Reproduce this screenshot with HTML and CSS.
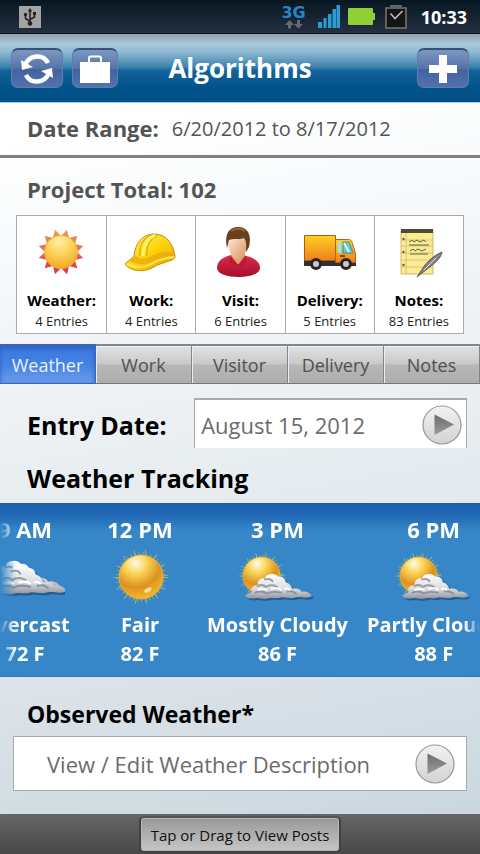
FILE: index.html
```html
<!DOCTYPE html>
<html lang="en">
<head>
    <meta charset="utf-8">
    <meta name="viewport" content="width=device-width, initial-scale=1">
    <title>Algorithms</title>
    <link rel="stylesheet" href="styles.css">
</head>
<body>
    <!-- shared gradients and symbols -->
    <svg class="sprites" width="0" height="0" aria-hidden="true">
        <defs>
            <radialGradient id="sunFill" cx=".45" cy=".2" r=".85">
                <stop offset="0" stop-color="#fff0a0"/>
                <stop offset=".5" stop-color="#fbcf55"/>
                <stop offset="1" stop-color="#f0a21c"/>
            </radialGradient>
            <linearGradient id="rayFill" x1="0" y1="0" x2="0" y2="1">
                <stop offset="0" stop-color="#f09a50"/>
                <stop offset="1" stop-color="#d8344a"/>
            </linearGradient>
            <linearGradient id="hatFill" x1="0" y1="0" x2="1" y2="1">
                <stop offset="0" stop-color="#fff27a"/>
                <stop offset=".5" stop-color="#fcd60c"/>
                <stop offset="1" stop-color="#e99a06"/>
            </linearGradient>
            <linearGradient id="shirtFill" x1="0" y1="0" x2="0" y2="1">
                <stop offset="0" stop-color="#d92b4a"/>
                <stop offset="1" stop-color="#a80e2c"/>
            </linearGradient>
            <linearGradient id="faceFill" x1="0" y1="0" x2="1" y2="1">
                <stop offset="0" stop-color="#fff0e2"/>
                <stop offset="1" stop-color="#d9935c"/>
            </linearGradient>
            <linearGradient id="truckFill" x1="0" y1="0" x2="0" y2="1">
                <stop offset="0" stop-color="#fdd21f"/>
                <stop offset="1" stop-color="#f07f1c"/>
            </linearGradient>
            <linearGradient id="penFill" x1="0" y1="0" x2="1" y2="1">
                <stop offset="0" stop-color="#444"/>
                <stop offset=".5" stop-color="#888"/>
                <stop offset="1" stop-color="#333"/>
            </linearGradient>
            <radialGradient id="ballFill" cx=".38" cy=".18" r=".85">
                <stop offset="0" stop-color="#fffbe8"/>
                <stop offset=".3" stop-color="#fbd455"/>
                <stop offset=".65" stop-color="#dd9120"/>
                <stop offset="1" stop-color="#f7bb2b"/>
            </radialGradient>
            <linearGradient id="cloudFill" x1="0" y1="0" x2="0" y2="1">
                <stop offset="0" stop-color="#fff"/>
                <stop offset=".6" stop-color="#d9dbe0"/>
                <stop offset="1" stop-color="#8e949e"/>
            </linearGradient>
            <linearGradient id="arrowFill" x1="0" y1="0" x2="0" y2="1">
                <stop offset="0" stop-color="#6c6c6c"/>
                <stop offset="1" stop-color="#9c9c9c"/>
            </linearGradient>
            <linearGradient id="discFill" x1="0" y1="0" x2="0" y2="1">
                <stop offset="0" stop-color="#f2f2f2"/>
                <stop offset="1" stop-color="#d2d2d2"/>
            </linearGradient>
        </defs>
        <symbol id="play" viewBox="0 0 40 40">
            <circle cx="20" cy="20" r="19" fill="url(#discFill)" stroke="#999" stroke-width="1.2"/>
            <path d="M12.5 9.5 32 19.5 12.5 30z" fill="url(#arrowFill)"/>
        </symbol>
        <symbol id="ball" viewBox="0 0 56 56">
            <circle cx="28" cy="28" r="23" fill="none" stroke="#c9c33c" stroke-width="4" stroke-dasharray=".7 3.2" opacity=".8"/>
            <circle cx="28" cy="28" r="24.500" fill="none" stroke="#d8c846" stroke-width="6" stroke-dasharray=".7 10.100" opacity=".8"/>
            <circle cx="28" cy="28" r="22" fill="url(#ballFill)" stroke="#e8b040"/>
            <ellipse cx="35" cy="41" rx="4" ry="2" fill="#fff3b0" opacity=".8" transform="rotate(-28 35 41)"/>
        </symbol>
        <symbol id="cloud" viewBox="0 0 76 34">
            <path d="M1 27c3-2 5-2 7-4-2-4 2-7 6-7 0-5 4-8 8-7 3-6 11-6 14-2 5-1 8 3 8 6 4 1 6 4 7 7 5-1 8 0 10 3 4-1 9 1 11 5-6 3-12 0-17 1-5 2-10 0-15 0-5 2-10 0-14 1-6 2-10-1-14 0-5 1-9 0-11-3z" fill="#16426e" opacity=".6" transform="translate(2 2)"/>
            <path d="M1 27c3-2 5-2 7-4-2-4 2-7 6-7 0-5 4-8 8-7 3-6 11-6 14-2 5-1 8 3 8 6 4 1 6 4 7 7 5-1 8 0 10 3 4-1 9 1 11 5-6 3-12 0-17 1-5 2-10 0-15 0-5 2-10 0-14 1-6 2-10-1-14 0-5 1-9 0-11-3z" fill="url(#cloudFill)"/>
            <path d="M14 17c4-2 7-1 9 1 4-3 9-2 12 0M22 10c4-1 7 0 8 2M12 24c5-2 9-1 12 1 5-3 10-2 15-1M46 23c4-1 7 0 9 2" fill="none" stroke="#777d86" stroke-width="2" stroke-linecap="round" opacity=".7"/>
            <path d="M15 21c4-1 7-1 9 0M29 20c4-1 8-1 10 1M24 7c3-2 6-1 8 0M43 20c2-1 4 0 5 1" fill="none" stroke="#fff" stroke-width="2" stroke-linecap="round"/>
        </symbol>
    </svg>

    <div class="status-bar">
        <svg class="usb" viewBox="0 0 22 22" aria-hidden="true">
            <rect width="22" height="22" fill="#a3a3a3"/>
            <g fill="none" stroke="#222" stroke-width="1.6">
                <path d="M11 4v13M11 15.500L6.500 12.500V9M11 13.500l4.500-2.500V8"/>
            </g>
            <path d="M11 2l2.200 3.500H8.800zM14 6h3v3h-3z" fill="#222"/>
            <circle cx="6.500" cy="8.500" r="1.700" fill="#222"/>
            <circle cx="11" cy="17.500" r="2.300" fill="#222"/>
        </svg>
        <div class="network">
            <span>3G</span>
            <svg viewBox="0 0 18 9" aria-hidden="true">
                <path d="M4.500 0 9 5H6v3.500H3V5H0zM13.500 8.500 18 4h-3V0h-3v4H9z" fill="#666b70"/>
            </svg>
        </div>
        <svg class="signal" viewBox="0 0 22 23" aria-hidden="true">
            <path d="M0 17h4v6H0zM5.500 13h3v10h-3zM10 9h3.500v14H10zM14.500 4H18v19h-3.500zM18.500 0H22v23h-3.500z" fill="#2c9dd2"/>
        </svg>
        <svg class="battery" viewBox="0 0 27 17" aria-hidden="true">
            <path d="M1 0h23a1 1 0 0 1 1 1v4h2v7h-2v4a1 1 0 0 1-1 1H1a1 1 0 0 1-1-1V1a1 1 0 0 1 1-1z" fill="#8ed036"/>
        </svg>
        <svg class="alarm" viewBox="0 0 22 24" aria-hidden="true">
            <path d="M5 1h12" stroke="#666" stroke-width="2"/>
            <rect x="1" y="3" width="20" height="20" fill="#151515" stroke="#777" stroke-width="1.500"/>
            <path d="M5.500 8.500 10 13.500l7.500-7.500" fill="none" stroke="#bbb" stroke-width="1.600"/>
        </svg>
        <span class="clock">10:33</span>
    </div>

    <header class="header">
        <div class="header-left">
            <button type="button" class="icon-btn" aria-label="Refresh">
                <svg width="34" height="30" viewBox="0 0 34 30" aria-hidden="true">
                    <g fill="none" stroke="#fff" stroke-width="4.500">
                        <path d="M5 11C9 1 23-1 28 9"/>
                        <path d="M29 19C25 29 11 31 6 21"/>
                    </g>
                    <path d="M1 6l1 10 11-3zM33 24l-1-10-11 3z" fill="#fff"/>
                </svg>
            </button>
            <button type="button" class="icon-btn narrow" aria-label="Projects">
                <svg width="30" height="28" viewBox="0 0 30 28" aria-hidden="true">
                    <path d="M0 7h30v21H0z" fill="#fff"/>
                    <path d="M9 7V3q0-1.500 1.500-1.500h9Q21 1.500 21 3v4" fill="none" stroke="#fff" stroke-width="2"/>
                </svg>
            </button>
        </div>
        <h1>Algorithms</h1>
        <div class="header-right">
            <button type="button" class="icon-btn" aria-label="Add">
                <svg width="28" height="28" viewBox="0 0 28 28" aria-hidden="true">
                    <path d="M10 0h8v10h10v8H18v10h-8V18H0v-8h10z" fill="#fff"/>
                </svg>
            </button>
        </div>
    </header>

    <main>
        <div class="date-range">
            <strong>Date Range:</strong>
            <span>6/20/2012 to 8/17/2012</span>
        </div>

        <section class="totals">
            <h2>Project Total: 102</h2>
            <ul class="cards">
                <li>
                    <svg viewBox="0 0 52 52" aria-hidden="true">
                        <g transform="translate(1 2)">
                            <path d="M46.200 30 37.900 32 40.300 40.300 32 37.900 30 46.200 24 40 18 46.200 16 37.900 7.700 40.300 10.100 32 1.800 30 8 24 1.800 18 10.100 16 7.700 7.700 16 10.100 18 1.800 24 8 30 1.800 32 10.100 40.300 7.700 37.900 16 46.200 18 40 24z" fill="url(#rayFill)"/>
                            <circle cx="24" cy="24" r="16.500" fill="url(#sunFill)" stroke="#f0b040"/>
                        </g>
                    </svg>
                    <strong>Weather:</strong>
                    <span>4 Entries</span>
                </li>
                <li>
                    <svg viewBox="0 0 52 52" aria-hidden="true">
                        <path d="M0 38c2-3 6-4 9-8 1-12 8-22 20-22 12 0 19 9 21 22 0 2-1 3-3 4-8 3-14 4-20 8-7 4-22 4-27-4z" fill="url(#hatFill)" stroke="#c98f0c"/>
                        <path d="M10 29c5 5 12 4 17 1 7-5 15-4 22-4l1 4c-9 0-16 2-22 5-7 4-16 4-24 0z" fill="#eba710" opacity=".7"/>
                        <path d="M15 30c-1-11 4-19 14-22M22 30c-1-10 3-17 11-21" fill="none" stroke="#d8a80c" stroke-width="1.200"/>
                        <path d="M18 30c0-9 4-17 12-21" fill="none" stroke="#fff266" stroke-width="3"/>
                        <path d="M2 38c8 4 17 4 24 0 6-4 14-6 23-7" fill="none" stroke="#ffe45c" stroke-width="2"/>
                    </svg>
                    <strong>Work:</strong>
                    <span>4 Entries</span>
                </li>
                <li>
                    <svg viewBox="0 0 52 52" aria-hidden="true">
                        <path d="M3 42c0-8 7-11 14-13h12c8 2 17 5 17 13 0 12-43 12-43 0z" fill="url(#shirtFill)"/>
                        <path d="M17 26h14v6c0 3-3 4-6 7-4-3-7-5-8-8z" fill="#dfa06c"/>
                        <path d="M14 16c0-12 19-12 19 0 0 10-4 17-9 17s-10-7-10-17z" fill="url(#faceFill)"/>
                        <path d="M13 22C10 8 15 1 24 1c10 0 14 8 11 20l-3 5c0-6 1-10-2-14-5 2-11 0-15 2-1 3-1 5-2 8z" fill="#67401f"/>
                        <path d="M17 5c4-3 10-3 14 0" fill="none" stroke="#a7784b" stroke-width="2" opacity=".7"/>
                        <path d="M17 30l7 9 7-9 2 6-7 5h-4l-7-5z" fill="#bb1737"/>
                    </svg>
                    <strong>Visit:</strong>
                    <span>6 Entries</span>
                </li>
                <li>
                    <svg viewBox="0 0 52 52" aria-hidden="true">
                        <path d="M0 34h52v6H0z" fill="#303030"/>
                        <path d="M.5 9.500h31v25H.5z" fill="url(#truckFill)" stroke="#a15e16"/>
                        <path d="M31.500 13.500h13c2 0 3 1 4 4l3 10v9H31.500z" fill="url(#truckFill)" stroke="#b06417"/>
                        <path d="M33.500 16h4v11h-4z" fill="#9ae2e6"/>
                        <path d="M39 16h6l4 11H39z" fill="#62c8e2" stroke="#427d91" stroke-width=".8"/>
                        <path d="M40 17l5 9" stroke="#dffaff" stroke-width="2"/>
                        <path d="M36 30h5" stroke="#5b3310" stroke-width="1.500"/>
                        <g fill="#c9c9c9" stroke="#252525" stroke-width="3">
                            <circle cx="12" cy="38" r="4.500"/>
                            <circle cx="42" cy="38" r="4.500"/>
                        </g>
                    </svg>
                    <strong>Delivery:</strong>
                    <span>5 Entries</span>
                </li>
                <li>
                    <svg viewBox="0 0 52 52" aria-hidden="true">
                        <path d="M8 4h32v44H8z" fill="#fbeb94" stroke="#c2a850" stroke-width=".8"/>
                        <path d="M8 3h32v4H8z" fill="#554733"/>
                        <path d="M13 7v41M8 14h32M8 20h32M8 27h32M8 34h32M8 41h32" stroke="#d4bc65" stroke-width=".8"/>
                        <path d="M16 16l3-2 2 2 3-2 3 2 4-2 2 2M16 19h20M17 25l3-2 2 2 3-2 4 2 4-2M17 28h18" fill="none" stroke="#5d6248" stroke-width="1"/>
                        <circle cx="10.500" cy="13" r="1.200" fill="#6d5c32"/>
                        <circle cx="10.500" cy="26" r="1.200" fill="#6d5c32"/>
                        <circle cx="10.500" cy="39" r="1.200" fill="#6d5c32"/>
                        <path d="M24 51l8-12c5-6 10-10 17-13-1 6-6 10-11 14z" fill="url(#penFill)" stroke="#444" stroke-width=".8"/>
                        <path d="M31 44L43 32" stroke="#ddd" stroke-width="1"/>
                    </svg>
                    <strong>Notes:</strong>
                    <span>83 Entries</span>
                </li>
            </ul>
        </section>

        <nav class="tabs">
            <button type="button" class="active">Weather</button>
            <button type="button">Work</button>
            <button type="button">Visitor</button>
            <button type="button">Delivery</button>
            <button type="button">Notes</button>
        </nav>

        <div class="entry-date">
            <label for="entryDate">Entry Date:</label>
            <button type="button" id="entryDate" class="field open">
                <span>August 15, 2012</span>
                <svg width="40" height="40" aria-hidden="true"><use href="#play"/></svg>
            </button>
        </div>

        <h2 class="tracking-title">Weather Tracking</h2>
        <div class="forecast">
            <div class="forecast-view">
                <div class="forecast-track">
                    <div class="hour">
                        <strong>9 AM</strong>
                        <svg viewBox="0 0 80 60" aria-hidden="true">
                            <use href="#cloud" x="-4" y="9" width="84" height="38"/>
                            <use href="#cloud" x="2" y="13" width="84" height="38"/>
                        </svg>
                        <strong>Overcast</strong>
                        <strong>72 F</strong>
                    </div>
                    <div class="hour">
                        <strong>12 PM</strong>
                        <svg viewBox="0 0 80 60" aria-hidden="true">
                            <use href="#ball" x="13" y="2" width="56" height="56"/>
                        </svg>
                        <strong>Fair</strong>
                        <strong>82 F</strong>
                    </div>
                    <div class="hour">
                        <strong>3 PM</strong>
                        <svg viewBox="0 0 80 60" aria-hidden="true">
                            <use href="#ball" x="1" y="5" width="47" height="47"/>
                            <use href="#cloud" x="7" y="23" width="72" height="32"/>
                        </svg>
                        <strong>Mostly Cloudy</strong>
                        <strong>86 F</strong>
                    </div>
                    <div class="hour">
                        <strong>6 PM</strong>
                        <svg viewBox="0 0 80 60" aria-hidden="true">
                            <use href="#ball" x="1" y="5" width="47" height="47"/>
                            <use href="#cloud" x="7" y="23" width="72" height="32"/>
                        </svg>
                        <strong>Partly Cloudy</strong>
                        <strong>88 F</strong>
                    </div>
                </div>
            </div>
        </div>

        <div class="observed">
            <label for="observed">Observed Weather*</label>
            <button type="button" id="observed" class="field">
                <span>View / Edit Weather Description</span>
                <svg width="40" height="40" aria-hidden="true"><use href="#play"/></svg>
            </button>
        </div>
    </main>

    <footer class="footer">
        <button type="button">Tap or Drag to View Posts</button>
    </footer>
</body>
</html>
```
FILE: styles.css
```css
:root {
    --text-grey: #545454;
    --line-grey: #a8abad;
    --sky: #3787c8;
}

* {
    box-sizing: border-box;
}

body {
    margin: 0;
    min-height: 100vh;
    display: flex;
    flex-direction: column;
    font-family: "Open Sans", "Noto Sans", sans-serif;
    background: linear-gradient(170deg, #fff 15%, #edf1f4 45%, #dde4e9 72%, #c8d5de 100%);
    color: #000;
}

h1, h2, ul {
    margin: 0;
    padding: 0;
}

button {
    font-family: inherit;
    margin: 0;
    cursor: pointer;
}

main {
    flex: 1;
}

.sprites {
    position: absolute;
}

/* Phone status bar */
.status-bar {
    display: flex;
    align-items: center;
    height: 34px;
    padding: 0 13px 0 19px;
    background: linear-gradient(#071722, #253041);
    border-bottom: 1px solid #0b1320;
    color: #fff;
}

.usb {
    width: 22px;
    margin-right: auto;
}

.network {
    display: flex;
    flex-direction: column;
    align-items: center;
    margin-right: 12px;
    font: bold 16px/15px "DejaVu Sans", sans-serif;
    color: #2487c6;
}

.network svg {
    width: 18px;
    height: 9px;
}

.signal {
    width: 22px;
    margin-right: 8px;
}

.battery {
    width: 27px;
    margin-right: 10px;
}

.alarm {
    width: 22px;
    margin-right: 14px;
}

.clock {
    font-size: 18px;
    font-weight: bold;
}

/* Title bar */
.header {
    display: grid;
    grid-template-columns: 1fr auto 1fr;
    align-items: center;
    height: 69px;
    padding: 0 11px;
    background: linear-gradient(#929fac 0, #a9c8dc 14%, #8fbad4 26%, #3f83ad 48%, #13639a 54%, #00538a 80%, #044f86 100%);
    border-bottom: 1px solid #9fd0e6;
}

.header h1 {
    font-size: 26px;
    line-height: 36px;
    color: #fff;
}

.header-left {
    display: flex;
    gap: 9px;
}

.header-right {
    display: flex;
    justify-content: flex-end;
}

.icon-btn {
    display: flex;
    align-items: center;
    justify-content: center;
    width: 52px;
    height: 40px;
    padding: 0;
    border: 1px solid #5d7fae;
    border-top: 2px solid #34507a;
    border-radius: 7px;
    background: linear-gradient(#7c97c0, #5673a9 50%, #4461a0 51%, #5272ae);
}

.icon-btn.narrow {
    width: 46px;
}

/* Project summary */
.date-range {
    display: flex;
    align-items: center;
    gap: 13px;
    height: 55px;
    padding: 0 27px 2px;
    border-bottom: 3px solid #808080;
    font-size: 20px;
    color: var(--text-grey);
}

.date-range strong,
.totals h2 {
    font-size: 22px;
}

.totals {
    padding: 15px 16px 10px;
}

.totals h2 {
    padding: 0 11px;
    line-height: 32px;
    color: var(--text-grey);
}

.cards {
    display: grid;
    grid-template-columns: repeat(5, 1fr);
    margin-top: 10px;
    list-style: none;
    background: #fff;
    border: 1px solid var(--line-grey);
}

.cards li {
    display: flex;
    flex-direction: column;
    align-items: center;
    padding: 10px 0 3px;
    white-space: nowrap;
}

.cards li + li {
    border-left: 1px solid var(--line-grey);
}

.cards svg {
    width: 52px;
    height: 52px;
}

.cards strong {
    margin-top: 10px;
    font-size: 15px;
    line-height: 24px;
}

.cards span {
    font-size: 13px;
    line-height: 18px;
    color: #222;
}

/* Tabs */
.tabs {
    display: grid;
    grid-template-columns: repeat(5, 1fr);
}

.tabs button {
    height: 40px;
    padding: 0;
    border: 0;
    border-top: 2px solid #858585;
    border-right: 1px solid #858585;
    border-bottom: 1px solid #777;
    box-shadow: inset 1px 1px 0 #ededed;
    background: linear-gradient(#e2e2e2, #c9c9c9 48%, #b7b7b7 52%, #adadad);
    font-size: 18px;
    color: #505050;
}

.tabs .active {
    border-color: #3a68b8;
    box-shadow: inset 0 2px 5px #2a5fc0;
    background: linear-gradient(#3a78dc, #4581e4 50%, #6b9cea);
    color: #e8f1ff;
}

/* Entry form */
.entry-date {
    display: flex;
    align-items: center;
    justify-content: space-between;
    padding: 14px 13px 0 27px;
}

.entry-date label,
.tracking-title {
    font-size: 25px;
    font-weight: bold;
}

.entry-date label {
    padding-top: 4px;
}

.field {
    display: flex;
    align-items: center;
    justify-content: space-between;
    background: #fff;
    border: 1px solid var(--line-grey);
    color: #6c6c6c;
    font-size: 22px;
    text-align: left;
    white-space: nowrap;
}

.field.open {
    width: 62%;
    max-width: 274px;
    height: 50px;
    padding: 2px 4px 0 6px;
    border-width: 2px 1px 0;
}

.tracking-title {
    padding: 12px 27px 7px;
    line-height: 36px;
}

.forecast {
    background: linear-gradient(#1a5fae, #2068b4 7%, var(--sky) 16%);
    border-bottom: 1px solid #2e7ab8;
}

.forecast-view {
    overflow: hidden;
    mask-image: linear-gradient(90deg, transparent, #000 16px, #000 calc(100% - 16px), transparent);
}

.forecast-track {
    display: flex;
    gap: 19px;
    width: max-content;
    margin-left: -23px;
    padding: 12px 0 8px;
}

.hour {
    display: flex;
    flex-direction: column;
    align-items: center;
    min-width: 96px;
    font-size: 20px;
    line-height: 29px;
    color: #fff;
}

.hour strong:first-child {
    font-size: 22px;
}

.hour svg {
    width: 80px;
    height: 60px;
    margin: 3px 0;
}

.observed {
    padding: 21px 13px 23px;
}

.observed label {
    display: block;
    padding: 0 14px;
    font-size: 23px;
    font-weight: bold;
    line-height: 32px;
}

.observed .field {
    width: 100%;
    height: 55px;
    margin-top: 6px;
    padding: 0 11px 0 33px;
}

/* Bottom bar */
.footer {
    display: flex;
    justify-content: center;
    padding: 2px 0 1px;
    background: linear-gradient(#666, #484848);
}

.footer button {
    height: 37px;
    padding: 0 10px;
    border: 2px solid #424242;
    border-top-color: #555;
    border-radius: 5px;
    box-shadow: inset 0 0 0 1px #b5b5b5;
    background: linear-gradient(#989898, #c6c6c6);
    font-size: 15px;
    color: #111;
}
```
